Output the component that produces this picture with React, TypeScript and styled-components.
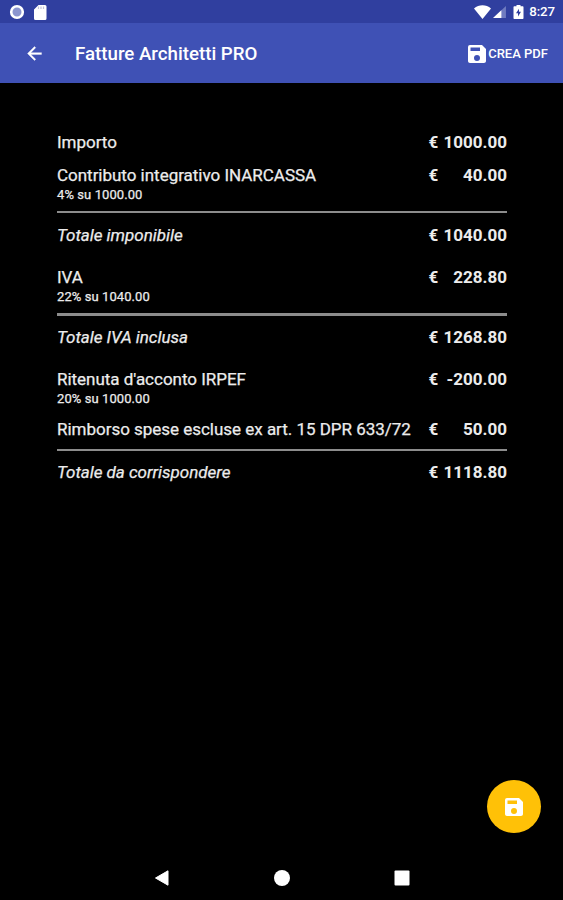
import React from 'react';
import styled, { createGlobalStyle } from 'styled-components';

const GlobalStyle = createGlobalStyle`
  * { box-sizing: border-box; }
  body { margin: 0; background: #000; }
`;

const Screen = styled.div`
  width: 563px;
  height: 900px;
  display: flex;
  flex-direction: column;
  position: relative;
  overflow: hidden;
  background: #000;
  color: #ececec;
  font-family: Roboto, 'Liberation Sans', sans-serif;
`;

const StatusBar = styled.header`
  height: 23px;
  flex: none;
  display: flex;
  align-items: center;
  justify-content: space-between;
  padding: 1px 8px 0 9px;
  background: #303f9f;
  color: #fff;
`;

const StatusGroup = styled.div<{ $gap: number }>`
  display: flex;
  align-items: center;
  gap: ${(p) => p.$gap}px;
`;

const Clock = styled.span`
  margin-left: 3px;
  font-size: 13.3px;
  font-weight: 500;
  line-height: 20px;
  letter-spacing: -0.1px;
`;

const AppBar = styled.div`
  height: 60px;
  flex: none;
  display: flex;
  align-items: center;
  padding: 1px 15px 0 24px;
  background: #3f51b5;
  color: #fff;
`;

const BackButton = styled.button`
  display: flex;
  padding: 0;
  border: 0;
  background: none;
  color: inherit;
`;

const Title = styled.h1`
  margin: 0 auto 0 30px;
  font-size: 18.7px;
  font-weight: 500;
  line-height: 26px;
`;

const PdfButton = styled(BackButton)`
  align-items: center;
  gap: 2px;
  font-family: inherit;
  font-size: 13px;
  font-weight: 500;
`;

const Summary = styled.main`
  flex: 1;
  display: flex;
  flex-direction: column;
  padding: 49px 56px 0 57px;
`;

const Row = styled.div<{ $top?: number }>`
  display: flex;
  justify-content: space-between;
  align-items: flex-start;
  margin-top: ${(p) => p.$top ?? 0}px;
  line-height: 21px;
  font-size: 17px;
`;

const Label = styled.div<{ $total?: boolean }>`
  font-style: ${(p) => (p.$total ? 'italic' : 'normal')};
  white-space: nowrap;
  letter-spacing: -0.02px;
  -webkit-text-stroke: 0.25px currentColor;
`;

const Note = styled.div`
  height: 17px;
  font-size: 13px;
  line-height: 18px;
  letter-spacing: 0.08px;
`;

const Amount = styled.div`
  width: 78.5px;
  display: flex;
  justify-content: space-between;
  font-weight: 700;
  white-space: nowrap;
`;

const Rule = styled.hr<{ $top: number; $size?: number }>`
  width: 100%;
  height: ${(p) => p.$size ?? 2}px;
  flex: none;
  margin: ${(p) => p.$top}px 0 0;
  border: 0;
  background: #8c8c8c;
`;

const Fab = styled.button`
  position: absolute;
  right: 22px;
  bottom: 67px;
  width: 54px;
  height: 53px;
  display: flex;
  align-items: center;
  justify-content: center;
  padding: 0;
  border: 0;
  border-radius: 50%;
  background: #ffc107;
  color: #fff;
`;

const NavBar = styled.nav`
  height: 45px;
  flex: none;
  display: flex;
  align-items: center;
  justify-content: center;
  gap: 104px;
  color: #fff;
`;

const SaveIcon = ({ size }: { size: number }) => (
  <svg width={size} height={size} viewBox="3 3 18 18" fill="currentColor">
    <path d="M17 3H5a2 2 0 0 0-2 2v14c0 1.100.9 2 2 2h14c1.100 0 2-.9 2-2V7l-4-4zm-5 16a3 3 0 1 1 0-6 3 3 0 0 1 0 6zm3-10H5V5h10v4z" />
    <path d="M4 4h12v1.400H4zM4 4h1.500v6H4z" />
  </svg>
);

type LineProps = { label: string; value: string; note?: string; total?: boolean; top?: number };

const Line = ({ label, value, note, total, top }: LineProps) => (
  <Row $top={top}>
    <Label $total={total}>
      {label}
      {note && <Note>{note}</Note>}
    </Label>
    <Amount>
      <span>€</span>
      <span>{value}</span>
    </Amount>
  </Row>
);

export default function App() {
  return (
    <Screen>
      <GlobalStyle />
      <StatusBar>
        <StatusGroup $gap={9}>
          <svg width="16" height="16" viewBox="0 0 16 16">
            <circle cx="8" cy="8" r="5.800" fill="#8b95cf" stroke="#fff" strokeWidth="2.600" />
          </svg>
          <svg width="13" height="15" viewBox="0 0 13 15">
            <path d="M4.500 0H11a1.500 1.500 0 0 1 1.500 1.500v12A1.500 1.500 0 0 1 11 15H1.500A1.500 1.500 0 0 1 0 13.500V4.500z" fill="#fff" />
            <path d="M4.500 1.500v2.500M7 1.500v2.500M9.500 1.500v2.500" stroke="#c3c6d8" strokeWidth="1.200" />
          </svg>
        </StatusGroup>
        <StatusGroup $gap={2}>
          <svg width="17" height="14" viewBox="0 0 17 14">
            <path d="M0 3.500C5-.8 12-.8 17 3.500L8.500 14z" fill="#fff" />
          </svg>
          <svg width="13" height="12" viewBox="0 0 14 13">
            <path d="M14 0v13H0z" fill="#6f7bc0" />
            <path d="M9 4.600V13H0z" fill="#fff" />
          </svg>
          <svg width="16" height="14" viewBox="0 0 16 14">
            <path d="M8.500 1.300V0h4v1.300h2c.6 0 1 .4 1 1V13c0 .6-.4 1-1 1h-8c-.6 0-1-.4-1-1V2.300c0-.6.4-1 1-1z" fill="#fff" />
            <path d="M11 3.800 8 8.200h2v3.300l3-4.700h-2z" fill="#303f9f" />
          </svg>
          <Clock>8:27</Clock>
        </StatusGroup>
      </StatusBar>
      <AppBar>
        <BackButton aria-label="Indietro">
          <svg width="21" height="21" viewBox="0 0 24 24" fill="currentColor">
            <path d="M20 11H7.800l5.600-5.600L12 4l-8 8 8 8 1.400-1.400L7.800 13H20z" stroke="currentColor" strokeWidth=".4" />
          </svg>
        </BackButton>
        <Title>Fatture Architetti PRO</Title>
        <PdfButton>
          <SaveIcon size={18} />
          <span>CREA PDF</span>
        </PdfButton>
      </AppBar>
      <Summary>
        <Line label="Importo" value="1000.00" />
        <Line label="Contributo integrativo INARCASSA" note="4% su 1000.00" value="40.00" top={12} />
        <Rule $top={8} />
        <Line label="Totale imponibile" value="1040.00" total top={12} />
        <Line label="IVA" note="22% su 1040.00" value="228.80" top={21} />
        <Rule $top={8} $size={3} />
        <Line label="Totale IVA inclusa" value="1268.80" total top={11} />
        <Line label="Ritenuta d'acconto IRPEF" note="20% su 1000.00" value="-200.00" top={21} />
        <Line label="Rimborso spese escluse ex art. 15 DPR 633/72" value="50.00" top={12} />
        <Rule $top={9} />
        <Line label="Totale da corrispondere" value="1118.80" total top={11} />
      </Summary>
      <Fab aria-label="Salva">
        <SaveIcon size={18} />
      </Fab>
      <NavBar>
        <svg width="16" height="16" viewBox="0 0 16 16">
          <path d="M1.500 8 14 .8v14.400z" fill="currentColor" stroke="currentColor" strokeLinejoin="round" />
        </svg>
        <svg width="16" height="16" viewBox="0 0 16 16">
          <circle cx="8" cy="8" r="8" fill="currentColor" />
        </svg>
        <svg width="16" height="16" viewBox="0 0 16 16">
          <rect x=".5" y=".5" width="15" height="15" rx="1" fill="currentColor" />
        </svg>
      </NavBar>
    </Screen>
  );
}
